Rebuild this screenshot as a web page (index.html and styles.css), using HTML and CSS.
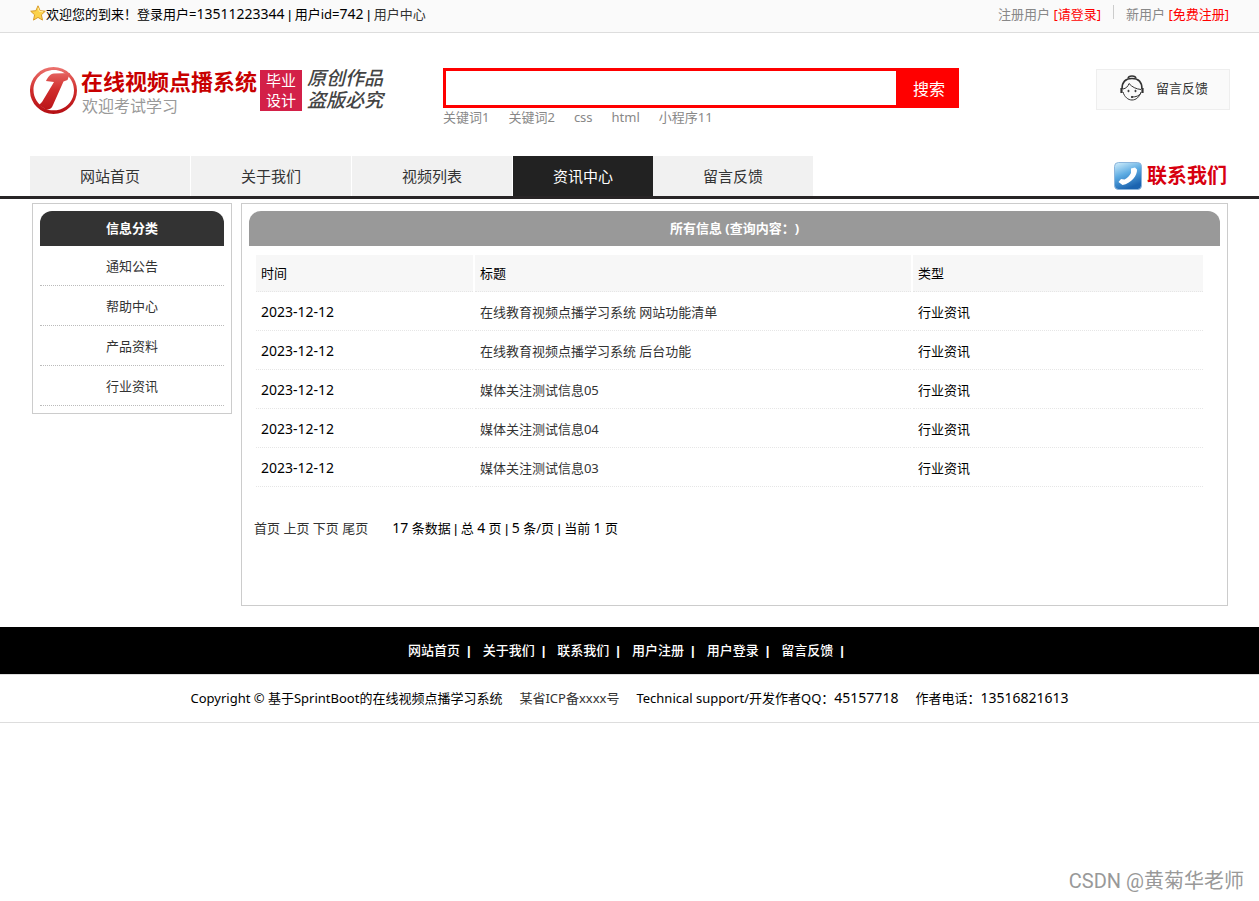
FILE: index.html
```html
<!DOCTYPE html>
<html lang="zh-CN">
<head>
<meta charset="utf-8">
<title>资讯中心 - 在线视频点播系统</title>
<link rel="stylesheet" href="styles.css">
</head>
<body>
<div class="topbar">
  <div class="welcome">
    <svg class="star" viewBox="0 0 16 16" aria-hidden="true"><path d="M8 .8l2.1 4.900 5.200.5-3.900 3.600 1.100 5.300L8 12.400l-4.500 2.700 1.100-5.300L.7 6.200l5.200-.5z" fill="#fbd24b" stroke="#d99b28" stroke-linejoin="round"/><path d="M8 2.800l1.400 3.600 3.600.4" fill="none" stroke="#fff0a8"/></svg>
    <span>欢迎您的到来！登录用户=<span class="num">13511223344</span> <span class="bar">|</span> 用户id=<span class="num">742</span> <span class="bar">|</span> <a href="#">用户中心</a></span>
  </div>
  <div class="account">
    <span>注册用户 <a href="#">[请登录]</a></span>
    <span class="divider"></span>
    <span>新用户 <a href="#">[免费注册]</a></span>
  </div>
</div>

<header class="header">
  <div class="brand">
    <svg class="emblem" viewBox="0 0 48 48" aria-hidden="true">
      <defs><linearGradient id="red" gradientUnits="userSpaceOnUse" x1="0" y1="0" x2="0" y2="47"><stop offset="0" stop-color="#ec7470"/><stop offset=".5" stop-color="#cf2c2b"/><stop offset="1" stop-color="#b50f14"/></linearGradient></defs>
      <path fill="url(#red)" fill-rule="evenodd" d="M23.500 0a23.500 23.500 0 1 0 0 47 23.500 23.500 0 0 0 0-47zM24 3c11 0 20 9 20 20.500 0 9-6 16.500-14 19-6 1.500-11 1-15-1-7-4-11.500-10.500-11.500-18.500C3.500 12 12.500 3 24 3z"/>
      <path fill="url(#red)" d="M16 14c2-4 4-7 8-7.500L40 6l-2.500 7-4 1.500L23 38c-1.500 4-4 5-7 4.500L9 38l3-3 12-20z"/>
    </svg>
    <div class="brand-text">
      <h1>在线视频点播系统</h1>
      <p>欢迎考试学习</p>
    </div>
    <div class="badge">毕业<br>设计</div>
    <div class="motto">原创作品<br>盗版必究</div>
  </div>

  <div class="search">
    <form class="search-form">
      <input type="text" aria-label="搜索内容">
      <button type="button">搜索</button>
    </form>
    <div class="keywords"><a href="#">关键词1</a><a href="#">关键词2</a><a href="#">css</a><a href="#">html</a><a href="#">小程序11</a></div>
  </div>

  <a class="feedback" href="#">
    <svg viewBox="0 0 24 26" aria-hidden="true" fill="none" stroke="#333">
      <path d="M2 14C2 7 6 3.500 12 3.500S22 7 22 14" stroke-width="1.600"/>
      <path d="M8 3.500C8.500 0 15.500 0 16 3.500" stroke-width="1.500"/>
      <path d="M3 17c1.500 5 5 8 9 8s7.500-3 9-8M3 14c3-.5 5-2.500 6-5.500 3 3.500 7 5.500 12 6"/>
      <path d="M1.500 13v5M22.500 13v5" stroke-width="2.200"/>
      <path d="M12 22c4 0 7-1 9-4" />
      <circle cx="8.500" cy="16" r=".7" fill="#333"/><circle cx="15.500" cy="16" r=".7" fill="#333"/><circle cx="12" cy="22" r=".7" fill="#333"/>
    </svg>
    <span>留言反馈</span>
  </a>
</header>

<nav class="nav">
  <a href="#">网站首页</a>
  <a href="#">关于我们</a>
  <a href="#">视频列表</a>
  <a class="active" href="#">资讯中心</a>
  <a href="#">留言反馈</a>
  <a class="contact" href="#">
    <svg viewBox="0 0 30 30" aria-hidden="true">
      <defs><linearGradient id="blue" x1="0" y1="0" x2=".4" y2="1"><stop offset="0" stop-color="#d5f0fc"/><stop offset=".5" stop-color="#5cabe2"/><stop offset="1" stop-color="#1b64b0"/></linearGradient></defs>
      <rect x="1.500" y="1.500" width="27" height="27" rx="4" fill="url(#blue)" stroke="#8bb5dc"/>
      <path d="M18 7.500l4-1 2 2c.5 6-6 14-14.500 15.500l-4-3 2.500-3 3.500.5c3-1.500 5-3.500 6.500-6.500z" fill="#fff"/>
    </svg>
    <span>联系我们</span>
  </a>
</nav>

<div class="content">
  <aside class="panel sidebar">
    <h2>信息分类</h2>
    <ul>
      <li><a href="#">通知公告</a></li>
      <li><a href="#">帮助中心</a></li>
      <li><a href="#">产品资料</a></li>
      <li><a href="#">行业资讯</a></li>
    </ul>
  </aside>
  <main class="panel main">
    <h2>所有信息 (查询内容：)</h2>
    <div class="listing">
      <table>
        <thead><tr><th class="date">时间</th><th>标题</th><th class="type">类型</th></tr></thead>
        <tbody>
          <tr><td class="num">2023-12-12</td><td><a href="#">在线教育视频点播学习系统 网站功能清单</a></td><td>行业资讯</td></tr>
          <tr><td class="num">2023-12-12</td><td><a href="#">在线教育视频点播学习系统 后台功能</a></td><td>行业资讯</td></tr>
          <tr><td class="num">2023-12-12</td><td><a href="#">媒体关注测试信息05</a></td><td>行业资讯</td></tr>
          <tr><td class="num">2023-12-12</td><td><a href="#">媒体关注测试信息04</a></td><td>行业资讯</td></tr>
          <tr><td class="num">2023-12-12</td><td><a href="#">媒体关注测试信息03</a></td><td>行业资讯</td></tr>
        </tbody>
      </table>
      <div class="pager">
        <span><a href="#">首页</a> <a href="#">上页</a> <a href="#">下页</a> <a href="#">尾页</a></span>
        <span><span class="num">17</span> 条数据 <span class="bar">|</span> 总 <span class="num">4</span> 页 <span class="bar">|</span> <span class="num">5</span> 条/页 <span class="bar">|</span> 当前 <span class="num">1</span> 页</span>
      </div>
    </div>
  </main>
</div>

<footer>
  <div class="footer-nav"><a href="#">网站首页</a><a href="#">关于我们</a><a href="#">联系我们</a><a href="#">用户注册</a><a href="#">用户登录</a><a href="#">留言反馈</a></div>
  <div class="copyright">
    <span>Copyright © 基于SprintBoot的在线视频点播学习系统</span>
    <a href="#">某省ICP备xxxx号</a>
    <span>Technical support/开发作者QQ：<span class="num">45157718</span></span>
    <span>作者电话：<span class="num">13516821613</span></span>
  </div>
</footer>
<div class="watermark">CSDN @黄菊华老师</div>
</body>
</html>
```
FILE: styles.css
```css
* { box-sizing: border-box; }
body {
  position: relative;
  min-height: 100vh;
  margin: 0;
  background: #fff;
  color: #000;
  font: 13px/20px "Noto Sans", "Noto Sans CJK SC", sans-serif;
  text-spacing-trim: space-all;
}
h1, h2, p, ul { margin: 0; padding: 0; }
ul { list-style: none; }
a { color: #333; text-decoration: none; }
.num { font-size: 14px; }
.bar { font-family: "Liberation Sans", sans-serif; }

.topbar {
  display: flex;
  justify-content: space-between;
  height: 33px;
  padding: 4px 30px 0;
  background: #fafafa;
  border-bottom: 1px solid #ddd;
}
.welcome, .account { display: flex; }
.star { width: 16px; height: 16px; margin-top: 1px; }
.account { color: #888; }
.account a { color: #f00; }
.divider { width: 1px; height: 14px; margin: 1px 12px; background: #ccc; }

.header {
  display: grid;
  grid-template-columns: 413px minmax(0, 516px) auto;
  align-items: start;
  padding: 34px 29px 0 30px;
  height: 123px;
}
.header .feedback { justify-self: end; }
.brand { display: flex; }
.emblem { width: 48px; height: 48px; }
.brand-text { margin-left: 3px; }
.brand-text h1 { color: #c80000; font-size: 22px; line-height: 28px; }
.brand-text p { padding-left: 1px; color: #999; font-size: 16px; line-height: 22px; }
.badge {
  width: 42px;
  height: 41px;
  margin: 3px 0 0 3px;
  background: #d32048;
  color: #fff;
  font-size: 15px;
  line-height: 20px;
  text-align: center;
}
.motto {
  margin: 1px 0 0 5px;
  color: #444;
  font: italic 500 19px/22px "Liberation Sans", "Noto Sans CJK SC", sans-serif;
}

.search-form { display: flex; height: 40px; margin-top: 1px; }
.search input {
  flex: 1;
  min-width: 0;
  padding: 0 10px;
  border: 3px solid #f00;
  border-right: 0;
  outline: 0;
}
.search button {
  width: 63px;
  padding: 0 0 0 3px;
  border: 0;
  background: #f00;
  color: #fff;
  font: 16px "Noto Sans", "Noto Sans CJK SC", sans-serif;
}
.keywords { display: flex; gap: 19px; line-height: 18px; }
.keywords a { color: #888; }
.feedback {
  display: flex;
  align-items: center;
  gap: 12px;
  height: 41px;
  margin-top: 2px;
  padding: 0 21px 4px 23px;
  border: 1px solid #eee;
  background: #fafafa;
}
.feedback svg { width: 24px; height: 26px; }

.nav {
  display: flex;
  gap: 1px;
  height: 43px;
  padding: 0 30px;
  border-bottom: 3px solid #282526;
}
.nav a { width: 160px; background: #f1f1f1; font-size: 15px; line-height: 40px; text-align: center; }
.nav .active { width: 140px; margin-right: -1px; background: #222; color: #fff; }
.nav .contact {
  display: flex;
  align-items: center;
  gap: 4px;
  width: auto;
  margin-left: auto;
  padding-right: 2px;
  background: none;
  color: #d7000f;
  font-size: 20px;
  font-weight: bold;
}
.contact svg { width: 30px; height: 30px; }

.content { display: flex; align-items: flex-start; gap: 9px; padding: 4px 31px 21px 32px; }
.panel { padding: 7px; border: 1px solid #ccc; }
.panel h2 {
  border-radius: 12px 12px 0 0;
  background: #333;
  color: #fff;
  font-size: 13px;
  line-height: 35px;
  text-align: center;
}
.sidebar { flex: 0 0 200px; }
.sidebar li { height: 40px; border-bottom: 1px dotted #bbb; line-height: 41px; text-align: center; }
.main { flex: 1; min-height: 403px; }
.panel.main h2 { background: #999; }
.listing { padding: 7px 15px 0 5px; }
table { width: 100%; border-spacing: 2px; table-layout: fixed; }
th, td { height: 37px; padding: 0 5px; border-bottom: 1px dotted #e6e6e6; font-weight: normal; text-align: left; }
th { background: #f7f7f7; }
.date { width: 23%; }
.type { width: 290px; }
.pager { display: flex; gap: 24px; padding-top: 29px; }

.footer-nav {
  display: flex;
  justify-content: center;
  padding-left: 5px;
  background: #000;
  color: #fff;
  line-height: 47px;
}
.footer-nav a { color: #fff; font-weight: 500; }
.footer-nav a::after {
  content: "|";
  margin: 0 12px 0 7px;
  font-family: "Liberation Sans", sans-serif;
  font-weight: bold;
}
.copyright {
  display: flex;
  justify-content: center;
  gap: 17px;
  border: solid #ddd;
  border-width: 1px 0;
  line-height: 47px;
}
.copyright .num { line-height: 20px; }
.watermark {
  position: absolute;
  right: 15px;
  bottom: 6px;
  color: #999;
  font: 20px/28px Roboto, "Noto Sans CJK SC", sans-serif;
}
```
